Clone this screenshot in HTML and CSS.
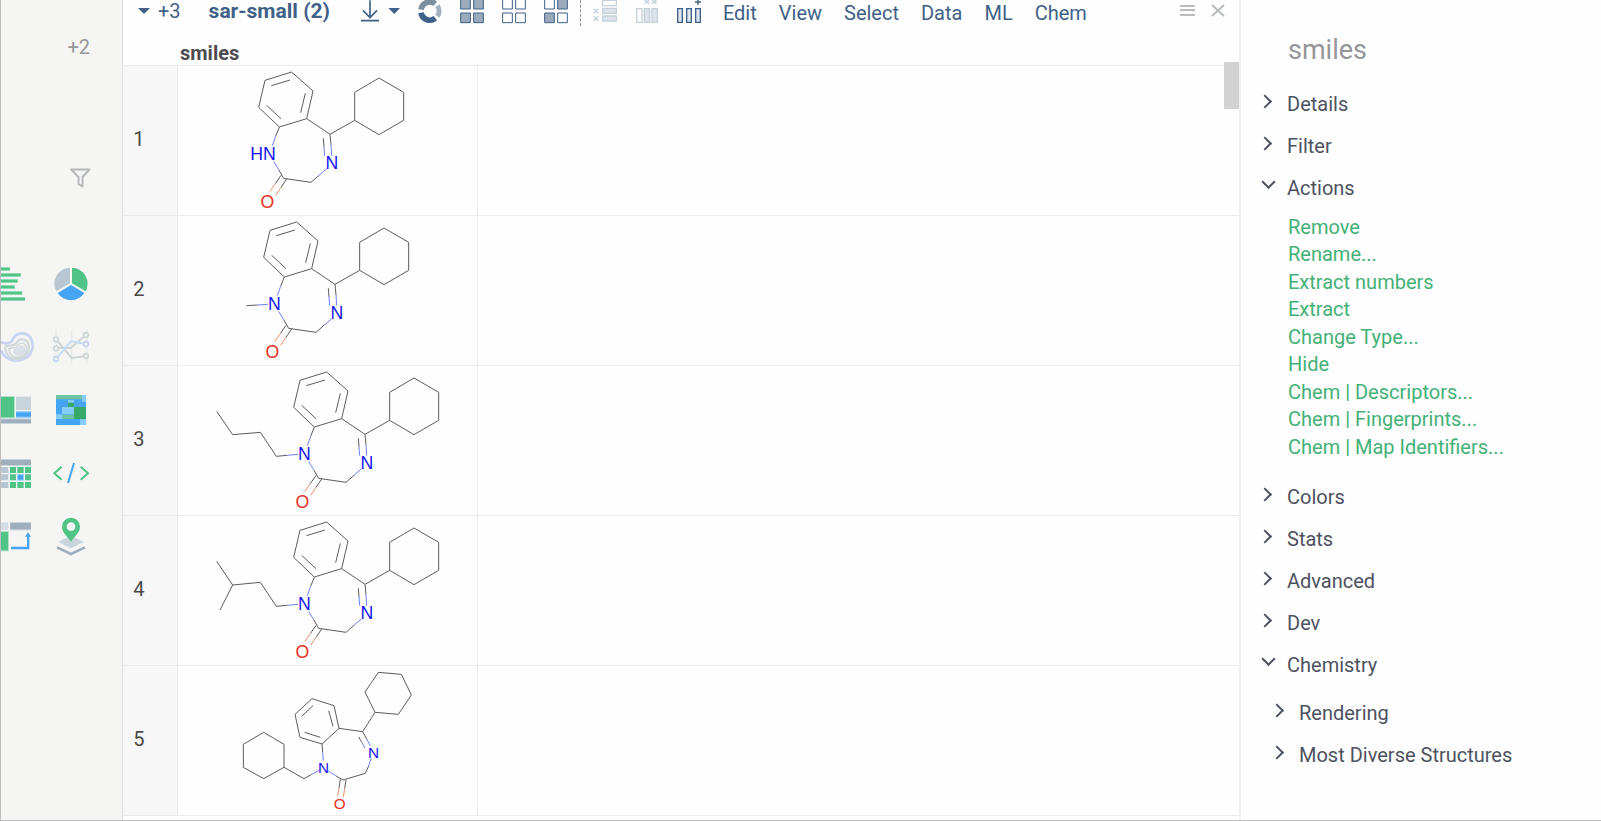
FILE: index.html
```html
<!DOCTYPE html>
<html lang="en">
<head>
<meta charset="utf-8">
<title>sar-small (2)</title>
<link rel="stylesheet" href="styles.css">
</head>
<body>
<svg class="defs" aria-hidden="true">
  <defs>
    <g id="core">
      <path class="bond" d="M364 36L284 61L265 142L327 201L409 176L428 93ZM303 77L359 60M405 100L391 158M289 136L332 176M327 201L316 229M409 176L479 223L553 181M553 181V97L626 54L700 97V181L626 224ZM479 223L482 255M459 235L461 261M446 346L422 367L340 355L325 329M332 346L315 371M349 357L332 382"/>
      <path class="bond-n" d="M316 229L306 257M482 255L484 287M461 261L463 287M469 326L446 346M325 329L310 304"/>
      <path class="bond-o" d="M315 371L298 395M332 382L316 406"/>
      <text class="atom-n" x="485" y="328">N</text>
      <text class="atom-o" x="291" y="445">O</text>
    </g>
  </defs>
</svg>
<div class="app">
  <aside class="rail">
    <button class="more">+2</button>
    <button class="filter" aria-label="Filters"><svg width="24" height="24" viewBox="0 0 24 24"><path d="M3 3.500H21.500L14.500 11V20.500L10.500 18V11Z" fill="none" stroke="#b5b7b9" stroke-width="2" stroke-linejoin="round"/></svg></button>
    <div class="viewers">
      <button aria-label="Bar chart"><svg width="39" height="40" viewBox="3 42 117 120"><path fill="#a6e0c0" d="M0 51H30V63H0ZM0 69H63V81H0ZM0 87H54V99H0ZM0 105H45V117H0ZM0 123H67V135H0ZM0 141H75V153H0Z"/><path fill="#50c487" d="M0 53H29V61H0ZM0 71H61V79H0ZM0 89H52V97H0ZM0 107H43V115H0ZM0 125H66V133H0ZM0 143H75V151H0Z"/></svg></button>
      <button aria-label="Pie chart"><svg width="40" height="40" viewBox="150 42 120 120"><path fill="#50c487" d="M216 53A48 48 0 0 1 257 124L216 100Z"/><path fill="#b7c6d0" d="M210 53A48 48 0 0 0 169 124L210 100Z"/><path fill="#46a5f3" d="M213 105L253 129A48 48 0 0 1 173 129Z"/></svg></button>
      <button aria-label="Density plot"><svg width="39" height="40" viewBox="3 231 117 120"><path fill="none" stroke="#c8d5f2" stroke-width="8" d="M0 276C15 280 28 283 36 272C41 261 48 249 67 250C90 252 99 270 98 291C95 316 75 332 46 332C25 331 8 318 2 300"/><path fill="none" stroke="#d0d8da" stroke-width="7" d="M18 286C30 288 42 289 49 280C54 270 62 266 72 269C86 274 89 288 86 302C79 320 64 328 46 327C25 325 12 305 18 286Z"/><path fill="none" stroke="#cbd5d5" stroke-width="4" d="M27 296C36 295 48 294 54 285C60 277 72 277 78 287C84 299 78 316 63 321C44 327 27 314 27 296Z"/><path fill="#d9e0e8" d="M40 304C43 292 55 292 60 286C70 284 80 291 80 303C75 318 62 322 51 318C43 315 39 310 40 304Z"/></svg></button>
      <button aria-label="PC plot"><svg width="40" height="40" viewBox="150 231 120 120"><path fill="none" stroke="#e8e9ea" stroke-width="4" d="M168 240V341M215 240V341M260 240V341"/><path fill="none" stroke="#cdd6d5" stroke-width="6" d="M172 273L215 324L253 319M173 294H212L253 259"/><path fill="none" stroke="#c3ddf8" stroke-width="6" d="M172 322L213 273L252 281"/><g fill="#f5f5f4" stroke-width="5"><g stroke="#cdd6d5"><circle cx="168" cy="268" r="7"/><circle cx="168" cy="295" r="7"/><circle cx="258" cy="255" r="7"/><circle cx="258" cy="318" r="7"/></g><g stroke="#c5d3f0"><circle cx="168" cy="327" r="7"/><circle cx="258" cy="282" r="7"/></g></g></svg></button>
      <button aria-label="Tree map"><svg width="39" height="40" viewBox="3 420 117 120"><path fill="#b4e4ca" d="M0 438H45V504H0Z"/><path fill="#50c487" d="M0 441H42V502H0Z"/><path fill="#c9d5dc" d="M48 440H93V480H48Z"/><path fill="#9ccff8" d="M48 483H93V504H48Z"/><path fill="#46a5f3" d="M48 487H93V500H48Z"/><path fill="#c9d5dc" d="M0 505H93V522H0Z"/><path fill="#9faebc" d="M0 508H93V519H0Z"/></svg></button>
      <button aria-label="Heat map"><svg width="40" height="40" viewBox="150 30 120 120"><path fill="#46a5f3" d="M168 45H258V135H168Z"/><path fill="#6fc3a2" d="M168 45H246V58H168ZM186 104H222V117H186Z"/><path fill="#84cdfa" d="M246 45H258V66H246ZM204 60H222V68H204ZM186 81H222V103H186ZM168 103H186V117H168ZM240 117H258V135H240Z"/><path fill="#37a96b" d="M204 68H222V81H204ZM222 81H258V117H222Z"/></svg></button>
      <button aria-label="Grid"><svg width="39" height="40" viewBox="3 219 117 120"><path fill="#c9d5dc" d="M0 237H93V258H0Z"/><path fill="#9faebc" d="M0 240H93V255H0Z"/><path fill="#b7c6d0" d="M0 261H25V279H0ZM0 283H25V301H0ZM0 306H25V324H0Z"/><path fill="#50c487" d="M30 261H48V279H30ZM52 261H71V279H52ZM75 261H93V279H75ZM30 283H48V301H30ZM75 283H93V301H75ZM30 306H48V324H30ZM52 306H71V324H52ZM75 306H93V324H75Z"/><path fill="#9ccff8" d="M51 282H72V302H51Z"/><path fill="#46a5f3" d="M54 285H69V299H54Z"/></svg></button>
      <button aria-label="Script viewer"><svg width="40" height="40" viewBox="150 219 120 120"><path fill="none" stroke="#50c487" stroke-width="6" d="M185 260L163 280L185 299M242 260L264 280L242 299"/><path stroke="#46a5f3" stroke-width="6" d="M222 249L204 309"/></svg></button>
      <button aria-label="Pivot table"><svg width="39" height="40" viewBox="3 408 117 120"><path fill="#d4dde6" d="M0 427H25V450H0Z"/><path fill="#c9d5dc" d="M30 426H93V451H30Z"/><path fill="#9faebc" d="M31 429H93V448H31Z"/><path fill="#b4e4ca" d="M0 453H27V514H0Z"/><path fill="#50c487" d="M0 456H24V511H0Z"/><path fill="#46a5f3" d="M33 500H81V470H75L84 457L93 470H88V508H33Z"/></svg></button>
      <button aria-label="Map"><svg width="40" height="40" viewBox="150 408 120 120"><path fill="#c9d5dc" d="M174 486L213 467L252 486L213 505Z"/><path fill="none" stroke="#9faebc" stroke-width="8" d="M171 502L213 522L255 502"/><path fill="#50c487" fill-rule="evenodd" d="M213 486C203 468 186 458 186 440A27 27 0 0 1 240 440C240 458 223 468 213 486ZM213 427A13 13 0 1 0 213 453A13 13 0 1 0 213 427Z"/></svg></button>
    </div>
  </aside>

  <main class="main">
    <div class="toolbar">
      <button class="tables"><svg width="12" height="26" viewBox="0 0 12 26"><path fill="#3f6187" d="M0 8H12L6 14Z"/></svg>+3</button>
      <h1 class="view-name">sar-small (2)</h1>
      <div class="tools">
        <button aria-label="Download"><svg width="42" height="26" viewBox="51 0 126 78"><path fill="none" stroke="#3f6187" stroke-width="5" d="M87 1V53M66 31L87 53L108 31M60 62H114"/><path fill="#3f6187" d="M142 24H177L160 42Z"/></svg></button>
        <button aria-label="Share"><svg width="24" height="26" viewBox="231 0 72 78"><path fill="none" stroke="#7b8f9e" stroke-width="17" d="M240 29A27 27 0 0 1 283 11"/><path fill="none" stroke="#3f6187" stroke-width="17" d="M240 38A27 27 0 0 0 283 55"/><path fill="none" stroke="#a0b2c2" stroke-width="15" d="M289 17A27 27 0 0 1 289 49"/></svg></button>
        <button aria-label="Select all"><svg width="24" height="26" viewBox="357 0 72 78"><path fill="#9babbc" stroke="#3f6187" stroke-width="3" d="M359 -2H388V27H359ZM398 -2H427V27H398ZM359 39H388V68H359ZM398 39H427V68H398Z"/></svg></button>
        <button aria-label="Select none"><svg width="24" height="26" viewBox="483 0 72 78"><path fill="#fff" stroke="#3f6187" stroke-width="3" d="M485 -2H514V27H485ZM524 -2H553V27H524ZM485 39H514V68H485ZM524 39H553V68H524Z"/></svg></button>
        <button aria-label="Invert selection"><svg width="24" height="26" viewBox="609 0 72 78"><g stroke="#3f6187" stroke-width="3"><path fill="#fff" d="M611 -2H640V27H611ZM650 39H679V68H650Z"/><path fill="#9babbc" d="M650 -2H679V27H650ZM611 39H640V68H611Z"/></g></svg></button>
      </div>
      <div class="tools edit-tools">
        <button aria-label="Delete rows" disabled><svg width="24" height="26" viewBox="756 0 72 78"><g stroke="#c3d2da" stroke-width="4"><path fill="#fff" d="M785 1H826V17H785Z"/><path fill="#dde3eb" d="M785 25H826V40H785ZM785 48H826V63H785Z"/><path d="M758 26L772 40M772 26L758 40M758 49L772 63M772 49L758 63"/></g></svg></button>
        <button aria-label="Delete columns" disabled><svg width="24" height="26" viewBox="882 0 72 78"><g stroke="#c3d2da" stroke-width="4"><path fill="#fff" d="M887 26H903V67H887Z"/><path fill="#dde3eb" d="M910 26H926V67H910ZM933 26H949V67H933Z"/><path d="M911 -1L925 12M925 -1L911 12M933 -1L947 12M947 -1L933 12"/></g></svg></button>
        <button aria-label="Add column"><svg width="24" height="26" viewBox="1008 0 72 78"><path fill="#dde6ee" stroke="#3f6187" stroke-width="4" d="M1010 26H1024V67H1010ZM1037 26H1051V67H1037ZM1064 26H1078V67H1064Z"/><path stroke="#3f6187" stroke-width="4" d="M1062 6H1080M1071 0V15"/></svg></button>
      </div>
      <nav class="menu"><button>Edit</button><button>View</button><button>Select</button><button>Data</button><button>ML</button><button>Chem</button></nav>
      <div class="window-tools">
        <button aria-label="Menu"><svg width="16" height="20" viewBox="0 0 16 20"><path stroke="#b9bbbd" stroke-width="2" d="M1 6H16M1 10H16M1 15H16"/></svg></button>
        <button aria-label="Close"><svg width="14" height="20" viewBox="0 0 14 20"><path stroke="#b9bbbd" stroke-width="2" d="M1 5L13 16M13 5L1 16"/></svg></button>
      </div>
    </div>

    <div class="grid">
      <table>
        <colgroup><col class="col-num"><col class="col-mol"><col></colgroup>
        <thead><tr><td></td><th scope="col">smiles</th><td></td></tr></thead>
        <tbody>
          <tr><th scope="row">1</th><td><svg class="mol" viewBox="23 18 897 447"><use href="#core"/><text class="atom-n" x="278" y="299">HN</text></svg></td><td></td></tr>
          <tr><th scope="row">2</th><td><svg class="mol" viewBox="23 18 897 447"><g transform="translate(15 0)"><use href="#core"/><text class="atom-n" x="297" y="299">N</text></g><path class="bond" d="M228 287L262 285"/><path class="bond-n" d="M262 285L292 283"/></svg></td><td></td></tr>
          <tr><th scope="row">3</th><td><svg class="mol" viewBox="23 18 897 447"><g transform="translate(105 0)"><use href="#core"/><text class="atom-n" x="297" y="299">N</text></g><path class="bond" d="M139 154L187 224L270 217L318 289L350 286"/><path class="bond-n" d="M350 286L383 283"/></svg></td><td></td></tr>
          <tr><th scope="row">4</th><td><svg class="mol" viewBox="23 18 897 447"><g transform="translate(105 0)"><use href="#core"/><text class="atom-n" x="297" y="299">N</text></g><path class="bond" d="M139 154L187 225L270 217L318 289L350 286M187 225L149 300"/><path class="bond-n" d="M350 286L383 283"/></svg></td><td></td></tr>
          <tr><th scope="row">5</th><td><svg class="mol" viewBox="23 18 897 447">
            <path class="bond" d="M425 116L374 163L389 232L455 252L506 205L491 137ZM428 137L394 169M403 217L450 232M488 199L475 152M506 205L577 215L614 157M624 37L693 43L723 105L684 163L614 157L584 96ZM577 215L589 237M565 231L575 248M595 318L585 340L518 360L496 347M510 358L506 384M527 360L523 386M455 252L457 277M424 343L401 356L341 322M341 322V253L280 217L219 253V322L280 356Z"/>
            <path class="bond-n" d="M589 237L600 257M575 248L584 265M603 295L595 318M496 347L474 333M457 277L459 302M424 343L446 331"/>
            <path class="bond-o" d="M506 384L502 409M523 386L519 411"/>
            <text class="atom-n small" x="610" y="293">N</text><text class="atom-n small" x="460" y="339">N</text><text class="atom-o small" x="508" y="447">O</text></svg></td><td></td></tr>
        </tbody>
      </table>
      <div class="scroll-thumb"></div>
    </div>
  </main>

  <aside class="panel">
    <h2>smiles</h2>
    <button class="section">Details</button>
    <button class="section">Filter</button>
    <button class="section" aria-expanded="true">Actions</button>
    <ul class="actions">
      <li><a href="#">Remove</a></li>
      <li><a href="#">Rename...</a></li>
      <li><a href="#">Extract numbers</a></li>
      <li><a href="#">Extract</a></li>
      <li><a href="#">Change Type...</a></li>
      <li><a href="#">Hide</a></li>
      <li><a href="#">Chem | Descriptors...</a></li>
      <li><a href="#">Chem | Fingerprints...</a></li>
      <li><a href="#">Chem | Map Identifiers...</a></li>
    </ul>
    <button class="section">Colors</button>
    <button class="section">Stats</button>
    <button class="section">Advanced</button>
    <button class="section">Dev</button>
    <button class="section" aria-expanded="true">Chemistry</button>
    <div class="nested">
      <button class="section">Rendering</button>
      <button class="section">Most Diverse Structures</button>
    </div>
  </aside>
</div>
</body>
</html>
```
FILE: styles.css
```css
* { box-sizing: border-box; }

body {
  margin: 0;
  font: 20px/26px Roboto, sans-serif;
  color: #4d5260;
  background: #fefefe;
}

button {
  margin: 0;
  padding: 0;
  border: 0;
  background: none;
  font: inherit;
  color: inherit;
  text-align: left;
}

svg { display: block; }

.defs { position: absolute; width: 0; height: 0; }

.app {
  display: flex;
  height: 100vh;
  border-left: 1px solid #bdbdbd;
  border-bottom: 1px solid #bdbdbd;
  overflow: hidden;
}

/* left rail */
.rail {
  flex: none;
  display: flex;
  flex-direction: column;
  width: 122px;
  padding-top: 34px;
  background: #f5f5f4;
  border-right: 1px solid #dcdcdc;
}

.more {
  align-self: flex-end;
  margin-right: 32px;
  color: #959799;
}

.filter {
  align-self: flex-end;
  margin: 106px 30px 74px 0;
}

.viewers {
  display: grid;
  grid-template-columns: 39px 40px;
  gap: 23px 10px;
}

/* toolbar */
.main {
  flex: 1;
  min-width: 0;
  display: flex;
  flex-direction: column;
}

.toolbar {
  display: flex;
  align-items: flex-start;
  height: 42px;
  padding: 0 14px 0 15px;
  color: #3f6187;
}

.tables {
  display: flex;
  gap: 8px;
  margin-right: 28px;
  line-height: 22px;
}

.view-name {
  margin: 0 28px 0 0;
  font-size: 21px;
  line-height: 22px;
  font-weight: 700;
  white-space: nowrap;
}

.tools { display: flex; gap: 18px; }

.edit-tools {
  margin-left: 12px;
  padding-left: 12px;
  border-left: 1px dashed #8a929a;
}

.menu {
  display: flex;
  gap: 22px;
  margin-left: 22px;
}

.window-tools {
  display: flex;
  gap: 16px;
  margin-left: auto;
}

/* grid */
.grid {
  position: relative;
  flex: 1;
  overflow: hidden;
}

table {
  width: 100%;
  table-layout: fixed;
  border-collapse: collapse;
}

.col-num { width: 54px; }
.col-mol { width: 300px; }

th, td { padding: 0; }

thead tr { height: 23px; }

thead th {
  padding: 0 0 1px 3px;
  line-height: 22px;
  text-align: left;
  color: #4d4a4e;
}

tbody tr { height: 150px; }

tbody th, tbody td {
  border-top: 1px solid #ececec;
  border-bottom: 1px solid #ececec;
}

tbody th, tbody td:nth-child(2) { border-right: 1px solid #ececec; }

tbody th {
  padding: 0 22px 4px 0;
  background: #f7f7f7;
  font-weight: 400;
  color: #4a4a4a;
}

.mol { width: 100%; height: 149px; }

.bond, .bond-n, .bond-o { fill: none; stroke-width: 3; stroke-linejoin: round; }
.bond { stroke: #5c5c5c; }
.bond-n { stroke: #6b7ffa; }
.bond-o { stroke: #f09066; }

.atom-n, .atom-o {
  font: 53px "Liberation Sans", Arial, sans-serif;
  text-anchor: middle;
}
.atom-n { fill: #1414f0; }
.atom-o { fill: #e8301f; }
.atom-n.small, .atom-o.small { font-size: 46px; }

.scroll-thumb {
  position: absolute;
  top: 20px;
  right: 0;
  width: 15px;
  height: 47px;
  background: #d2d2d2;
}

/* context panel */
.panel {
  flex: none;
  display: flex;
  flex-direction: column;
  width: 362px;
  padding: 32px 0 0 20px;
  border-left: 2px solid #f0f0f0;
}

.panel h2 {
  margin: 0 0 15px 27px;
  font-size: 27px;
  line-height: 36px;
  font-weight: 400;
  color: #949698;
}

.section {
  display: flex;
  align-items: center;
  gap: 16px;
  line-height: 42px;
}

.section::before {
  content: "";
  width: 8px;
  height: 8px;
  border: solid #4d5260;
  border-width: 2px 2px 0 0;
  transform: rotate(45deg);
  transform-origin: 75% 25%;
}

.section[aria-expanded="true"]::before { transform: rotate(135deg); }

.actions {
  display: grid;
  grid-auto-rows: 1fr;
  height: 247px;
  margin: 5px 0 15px 27px;
  padding: 0;
  list-style: none;
}

.actions a { color: #43b176; text-decoration: none; }

.nested { display: flex; flex-direction: column; margin: 6px 0 0 12px; }
```
